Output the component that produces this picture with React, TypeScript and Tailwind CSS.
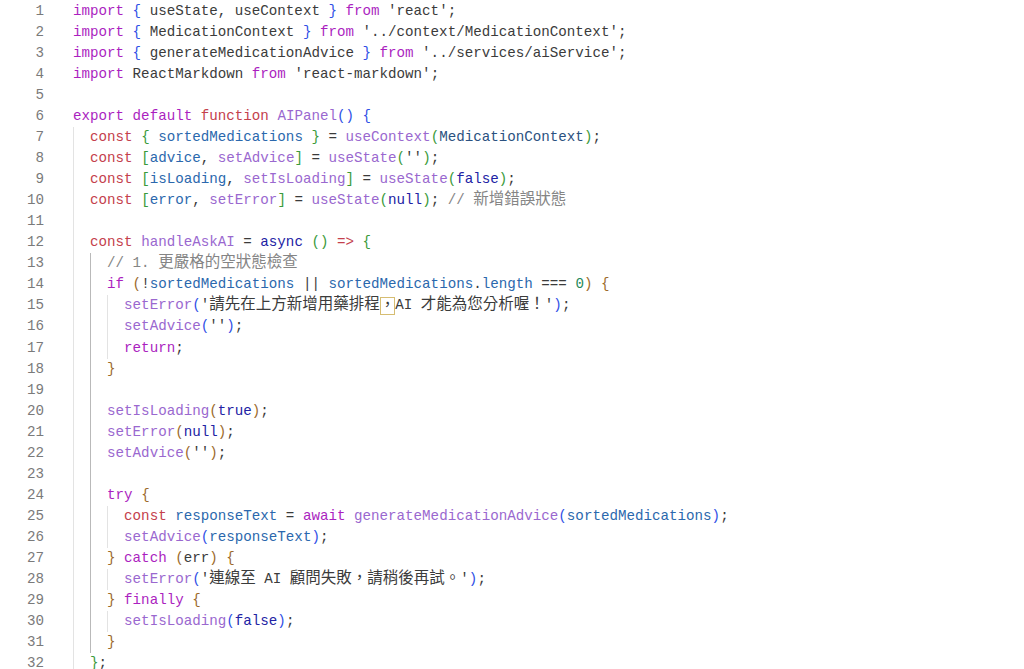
import React from 'react';

type Seg = [string, string];

// token colours, roughly what the editor theme shows
const colors: Record<string, string> = {
  k: 'text-[#ab1fbf]',
  s: 'text-[#c4404c]',
  f: 'text-[#9a68cf]',
  v: 'text-[#2b68ad]',
  t: 'text-[#2b5180]',
  d: 'text-[#3b3b3b]',
  q: 'text-[#3b3b3b]',
  c: 'text-[#858585]',
  n: 'text-[#2222a4]',
  g: 'text-[#1f8a5a]',
  b1: 'text-[#2f4fe6]',
  b2: 'text-[#3a9a3a]',
  b3: 'text-[#9c6a2c]',
};

const lines: { indent: number; segs: Seg[] }[] = [
  { indent: 0, segs: [['k', 'import'], ['d', ' '], ['b1', '{'], ['d', ' useState, useContext '], ['b1', '}'], ['d', ' '], ['k', 'from'], ['d', ' '], ['q', "'react'"], ['d', ';']] },
  { indent: 0, segs: [['k', 'import'], ['d', ' '], ['b1', '{'], ['d', ' MedicationContext '], ['b1', '}'], ['d', ' '], ['k', 'from'], ['d', ' '], ['q', "'../context/MedicationContext'"], ['d', ';']] },
  { indent: 0, segs: [['k', 'import'], ['d', ' '], ['b1', '{'], ['d', ' generateMedicationAdvice '], ['b1', '}'], ['d', ' '], ['k', 'from'], ['d', ' '], ['q', "'../services/aiService'"], ['d', ';']] },
  { indent: 0, segs: [['k', 'import'], ['d', ' ReactMarkdown '], ['k', 'from'], ['d', ' '], ['q', "'react-markdown'"], ['d', ';']] },
  { indent: 0, segs: [] },
  { indent: 0, segs: [['k', 'export'], ['d', ' '], ['k', 'default'], ['d', ' '], ['s', 'function'], ['d', ' '], ['f', 'AIPanel'], ['b1', '()'], ['d', ' '], ['b1', '{']] },
  { indent: 1, segs: [['s', 'const'], ['d', ' '], ['b2', '{'], ['d', ' '], ['v', 'sortedMedications'], ['d', ' '], ['b2', '}'], ['d', ' = '], ['f', 'useContext'], ['b2', '('], ['t', 'MedicationContext'], ['b2', ')'], ['d', ';']] },
  { indent: 1, segs: [['s', 'const'], ['d', ' '], ['b2', '['], ['v', 'advice'], ['d', ', '], ['f', 'setAdvice'], ['b2', ']'], ['d', ' = '], ['f', 'useState'], ['b2', '('], ['q', "''"], ['b2', ')'], ['d', ';']] },
  { indent: 1, segs: [['s', 'const'], ['d', ' '], ['b2', '['], ['v', 'isLoading'], ['d', ', '], ['f', 'setIsLoading'], ['b2', ']'], ['d', ' = '], ['f', 'useState'], ['b2', '('], ['n', 'false'], ['b2', ')'], ['d', ';']] },
  { indent: 1, segs: [['s', 'const'], ['d', ' '], ['b2', '['], ['v', 'error'], ['d', ', '], ['f', 'setError'], ['b2', ']'], ['d', ' = '], ['f', 'useState'], ['b2', '('], ['n', 'null'], ['b2', ')'], ['d', '; '], ['c', '// 新增錯誤狀態']] },
  { indent: 1, segs: [] },
  { indent: 1, segs: [['s', 'const'], ['d', ' '], ['f', 'handleAskAI'], ['d', ' = '], ['n', 'async'], ['d', ' '], ['b2', '()'], ['d', ' '], ['s', '=>'], ['d', ' '], ['b2', '{']] },
  { indent: 2, segs: [['c', '// 1. 更嚴格的空狀態檢查']] },
  { indent: 2, segs: [['k', 'if'], ['d', ' '], ['b3', '('], ['d', '!'], ['v', 'sortedMedications'], ['d', ' || '], ['v', 'sortedMedications'], ['d', '.'], ['v', 'length'], ['d', ' === '], ['g', '0'], ['b3', ')'], ['d', ' '], ['b3', '{']] },
  { indent: 3, segs: [['f', 'setError'], ['b1', '('], ['q', "'請先在上方新增用藥排程"], ['box', '，'], ['q', "AI 才能為您分析喔！'"], ['b1', ')'], ['d', ';']] },
  { indent: 3, segs: [['f', 'setAdvice'], ['b1', '('], ['q', "''"], ['b1', ')'], ['d', ';']] },
  { indent: 3, segs: [['k', 'return'], ['d', ';']] },
  { indent: 2, segs: [['b3', '}']] },
  { indent: 2, segs: [] },
  { indent: 2, segs: [['f', 'setIsLoading'], ['b3', '('], ['n', 'true'], ['b3', ')'], ['d', ';']] },
  { indent: 2, segs: [['f', 'setError'], ['b3', '('], ['n', 'null'], ['b3', ')'], ['d', ';']] },
  { indent: 2, segs: [['f', 'setAdvice'], ['b3', '('], ['q', "''"], ['b3', ')'], ['d', ';']] },
  { indent: 2, segs: [] },
  { indent: 2, segs: [['k', 'try'], ['d', ' '], ['b3', '{']] },
  { indent: 3, segs: [['s', 'const'], ['d', ' '], ['v', 'responseText'], ['d', ' = '], ['k', 'await'], ['d', ' '], ['f', 'generateMedicationAdvice'], ['b1', '('], ['v', 'sortedMedications'], ['b1', ')'], ['d', ';']] },
  { indent: 3, segs: [['f', 'setAdvice'], ['b1', '('], ['v', 'responseText'], ['b1', ')'], ['d', ';']] },
  { indent: 2, segs: [['b3', '}'], ['d', ' '], ['k', 'catch'], ['d', ' '], ['b3', '('], ['d', 'err'], ['b3', ')'], ['d', ' '], ['b3', '{']] },
  { indent: 3, segs: [['f', 'setError'], ['b1', '('], ['q', "'連線至 AI 顧問失敗，請稍後再試。'"], ['b1', ')'], ['d', ';']] },
  { indent: 2, segs: [['b3', '}'], ['d', ' '], ['k', 'finally'], ['d', ' '], ['b3', '{']] },
  { indent: 3, segs: [['f', 'setIsLoading'], ['b1', '('], ['n', 'false'], ['b1', ')'], ['d', ';']] },
  { indent: 2, segs: [['b3', '}']] },
  { indent: 1, segs: [['b2', '}'], ['d', ';']] },
];

const cjk = /([\u2E80-\u9FFF\u3000-\u303F\uFF00-\uFFEF]+)/;

function renderText(text: string) {
  return text.split(cjk).map((part, i) =>
    cjk.test(part) ? <span key={i} className="text-[15.5px]">{part}</span> : part
  );
}

function App() {
  return (
    <div className="min-h-screen bg-white overflow-hidden font-['Liberation_Mono','Noto_Sans_CJK_TC',monospace] text-[14.2px]">
      <div className="pt-[0.5px]">
        {lines.map((line, idx) => {
          const num = idx + 1;
          return (
            <div key={num} className="flex h-[21.07px] leading-[21.07px] whitespace-pre">
              <div className="w-[44px] shrink-0 text-right text-[#7a7a7a]">{num}</div>
              <div className="w-[29px] shrink-0" />
              {Array.from({ length: line.indent }).map((_, g) => (
                <div
                  key={g}
                  className={
                    g === 1 && num >= 13 && num <= 31
                      ? 'w-[17.04px] shrink-0 border-l border-[#b9b9b9]'
                      : 'w-[17.04px] shrink-0 border-l border-[#e3e3e3]'
                  }
                />
              ))}
              <div>
                {line.segs.map(([kind, text], i) =>
                  kind === 'box' ? (
                    <span
                      key={i}
                      className="inline-block h-[18px] leading-[18px] align-middle text-[15.5px] text-[#3b3b3b] shadow-[inset_0_0_0_1px_#d6bd72]"
                    >
                      {text}
                    </span>
                  ) : (
                    <span key={i} className={colors[kind]}>
                      {renderText(text)}
                    </span>
                  )
                )}
              </div>
            </div>
          );
        })}
      </div>
    </div>
  );
}

export default App;
